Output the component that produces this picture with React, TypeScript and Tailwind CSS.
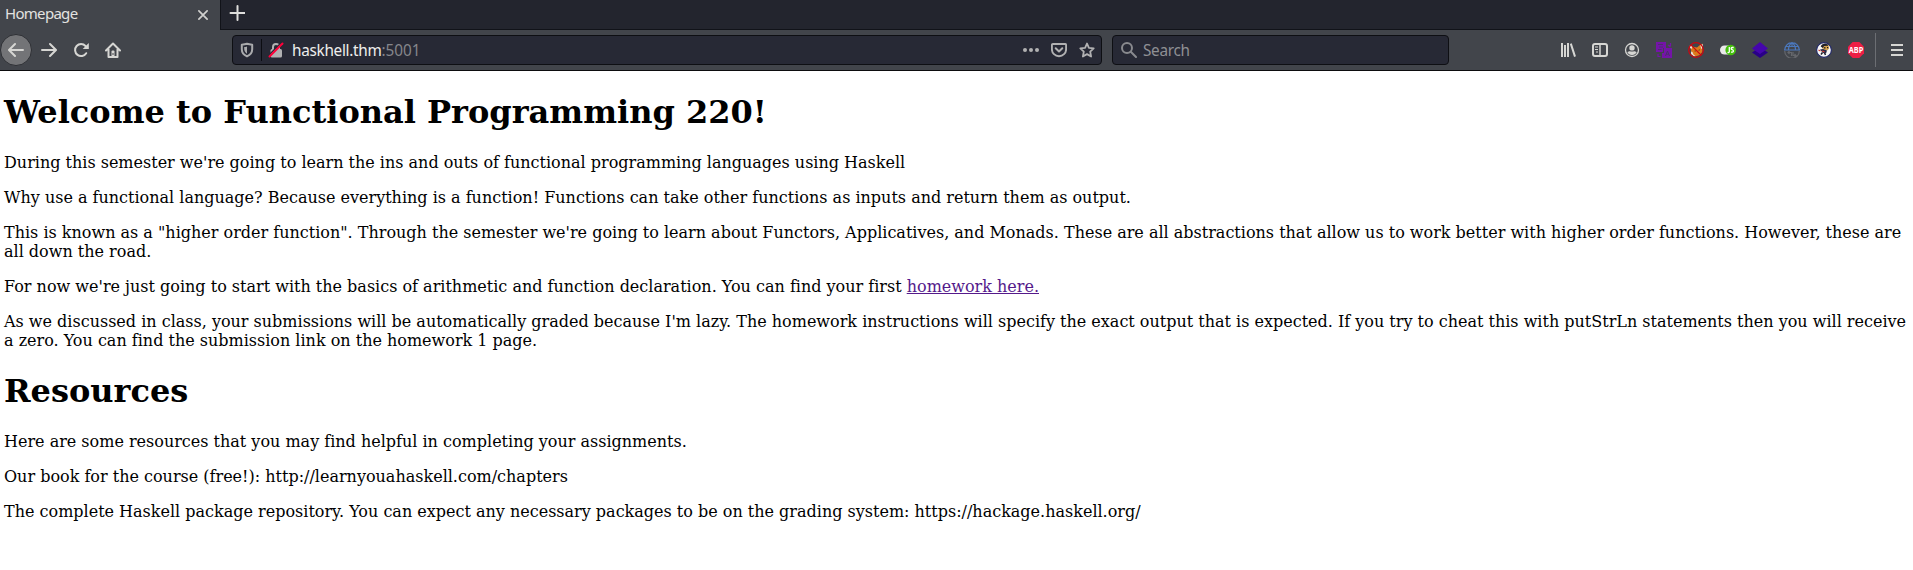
import React from "react";

type IconProps = { children: React.ReactNode; className?: string };

function Icon({ children, className = "h-4 w-4" }: IconProps) {
  return (
    <svg viewBox="0 0 16 16" fill="none" className={`block shrink-0 ${className}`}>
      {children}
    </svg>
  );
}

const line = { stroke: "currentColor", strokeWidth: 2, strokeLinecap: "round", strokeLinejoin: "round" } as const;

function TabStrip() {
  return (
    <div className="flex h-[30px] bg-[#42454b]">
      <div className="flex w-[220px] items-center justify-between pr-[11px] pl-[5px]">
        <span className="-mt-[4px] text-[15px] leading-5 tracking-[-0.7px] text-[#e2e2e0]">Homepage</span>
        <Icon className="-mt-px h-[12px] w-[12px] text-[#d0d0ce]">
          <path d="M2.5 2.5 13.5 13.5M13.5 2.500 2.500 13.500" {...line} strokeWidth={2.3} />
        </Icon>
      </div>
      <div className="flex flex-1 items-start border-b border-l border-[#111319] bg-[#23252e] pt-[5px] pl-2">
        <Icon className="h-4 w-4 text-[#dededc]">
          <path d="M8.5 1v14M1.5 8h14" {...line} />
        </Icon>
      </div>
    </div>
  );
}

function AddressBar() {
  return (
    <div className="flex h-[30px] w-[870px] items-center rounded-[4px] border border-[#0e0f13] bg-[#272935] pr-[6px] pl-[6px]">
      <Icon className="h-4 w-4 text-[#a9aaac]">
        <path d="M8 1.8C6.200 2.400 4.500 2.600 2.800 2.700v4.600c0 3.300 2.100 5.800 5.200 7.100 3.100-1.300 5.200-3.800 5.200-7.100V2.700C11.500 2.600 9.800 2.400 8 1.800Z" {...line} strokeWidth={2} />
        <path d="M8 4.400v7.300C6.200 10.500 5.200 9 5.200 7.100V5.100C6.200 5 7.100 4.800 8 4.400Z" fill="currentColor" />
      </Icon>
      <div className="ml-[6px] h-[22px] w-px bg-[#0c0d12]" />
      <Icon className="ml-[6px] h-4 w-4 text-[#b1b1b2]">
        <path d="M5 8V5a3 3 0 0 1 6 0v3" {...line} strokeLinecap="butt" />
        <rect x="2.500" y="7" width="11.500" height="8.500" rx="1.500" fill="currentColor" />
        <path d="M-.5 14.500 13.500.5" stroke="#272935" strokeWidth="1.500" />
        <path d="M1.500 14.500 14.500 1.500" stroke="#ff0039" strokeWidth="2" strokeLinecap="round" />
      </Icon>
      <span className="ml-[8px] flex-1 text-[15.33px] leading-5 tracking-[-0.3px] text-[#eeeeec]">
        haskhell.thm<span className="tracking-[-0.05px] text-[#85868b]">:5001</span>
      </span>
      <div className="flex gap-3 text-[#b1b1b2]">
        <Icon>
          <g fill="currentColor">
            <circle cx="2" cy="8" r="2" />
            <circle cx="8" cy="8" r="2" />
            <circle cx="14" cy="8" r="2" />
          </g>
        </Icon>
        <Icon>
          <path d="M1.900 2h12.200a1 1 0 0 1 1 1v4.200a7.100 7 0 0 1-14.200 0V3a1 1 0 0 1 1-1Z" {...line} strokeWidth={1.900} />
          <path d="m4.700 6.300 3.300 3.200 3.300-3.200" {...line} />
        </Icon>
        <Icon>
          <path d="m8 1.500 1.900 4.300 4.800.5-3.500 3.300.9 4.900L8 12.100l-4.100 2.400.9-4.900L1.300 6.300l4.800-.5Z" {...line} strokeWidth={1.800} />
        </Icon>
      </div>
    </div>
  );
}

function SearchBar() {
  return (
    <div className="ml-[10px] flex h-[30px] w-[337px] items-center rounded-[4px] border border-[#0e0f13] bg-[#272935] pl-2">
      <Icon className="h-4 w-4 text-[#898a8e]">
        <circle cx="6" cy="6" r="5" {...line} />
        <path d="m9.800 9.800 5.200 5.200" {...line} />
      </Icon>
      <span className="ml-[6px] text-[15.33px] leading-5 tracking-[-0.3px] text-[#8f9094]">Search</span>
    </div>
  );
}

function Extensions() {
  return (
    <div className="ml-[111px] flex gap-4 text-[#d6d6d3]">
      <Icon>
        <path d="M2 1v14M5 3v12M8 1v14M10.800 1.600l4.200 13" {...line} strokeLinecap="butt" />
      </Icon>
      <Icon>
        <rect x="1" y="2" width="14" height="12" rx="2" {...line} />
        <path d="M8 2v12" {...line} strokeWidth={1.500} />
        <path d="M3 5h3M3 7.500h3M4 10h2" stroke="currentColor" strokeWidth="1" />
      </Icon>
      <Icon>
        <circle cx="8" cy="8" r="6.500" stroke="currentColor" strokeWidth="1.300" />
        <circle cx="8" cy="5.900" r="2.700" fill="currentColor" />
        <path d="M3.300 10c1 .1 1.600-.7 2.700-.7.600.4 3.400.4 4 0 1.100 0 1.700.8 2.700.7A5 5 0 0 1 8 13a5 5 0 0 1-4.700-3Z" fill="currentColor" />
      </Icon>
      <Icon>
        <path d="M0 0h10v6H7v4H0Z" fill="#7414a8" />
        <path d="M8 6h8v10H6v-5h2Z" fill="#7414a8" />
        <path d="M2 2.500h5M3 5h4M2 7.500h3.500" stroke="#4a2f6b" strokeWidth=".9" />
        <path d="m9.500 14 2-5 2 5m-3.300-1.800h2.600" stroke="#4a2f6b" />
        <path d="M12 3.500h2.500V1M14.500 5l-2.500-2M2 12v2.500h2.500" stroke="#7414a8" strokeWidth="1.200" />
      </Icon>
      <Icon>
        <path d="m2 3 4 2 3 .5L12 3l2.500-1.500v8L12 13l-5 1.500L3.500 12 3 8Z" fill="#dd7a1c" />
        <path d="m12.300 3.500 2.500-1.500-.2 4-1.300 1Z" fill="#ece3dc" />
        <path d="m2 3 2.500 1.500L3.500 7 1.500 5.500Z" fill="#ece3dc" />
        <path d="m3 9.500 1.500.5 1 2.500 2 1.500-1.500.5-3-2.500Z" fill="#e9ddd1" />
        <path d="M6.500 9H8M10.500 8.300 12 7.800" stroke="#70421b" />
        <circle cx="8" cy="8" r="7.300" stroke="#cc0710" strokeWidth="1.300" />
        <path d="m2.900 2.900 10.200 10.200" stroke="#cc0710" strokeWidth="1.300" />
      </Icon>
      <Icon>
        <rect x="0" y="3.500" width="13" height="9" rx="4.500" fill="#e9e9e9" />
        <circle cx="10.700" cy="8" r="5.300" fill="#43c00b" />
        <path d="M9.300 5v4.700q0 1-1.800.8M13.700 5.500h-1.600q-.9 0-.9 1 0 .9 1 1.200 1.200.3 1.200 1.400 0 1.300-2.400 1" stroke="#fff" strokeWidth="1.300" />
      </Icon>
      <Icon>
        <path d="m8 5 8 5.500L8 16l-8-5.500Z" fill="#290087" />
        <path d="m8 0 8 6.500L8 12 0 6.500Z" fill="#4505ad" />
      </Icon>
      <Icon>
        <g stroke="#4b78bd" strokeWidth="1.200">
          <path d="M.7 8a7.300 7.300 0 0 1 14.600 0M0 8h16M2 4.500h12M8 0v5M4.500 8c0-3.500 1.500-6 3.500-7.500C10 2 11.500 4.500 11.500 8" />
        </g>
        <g stroke="#65676c" strokeWidth="1.200">
          <path d="M.7 9a7.300 7.300 0 0 0 14.600 0M4 10.500h3.500V14M12 13.500H9V10M5.500 9 4 10.500 5.500 12M10.500 12l1.500 1.500-1.500 1.500" />
        </g>
      </Icon>
      <Icon>
        <circle cx="8" cy="8" r="7.400" fill="#f7f7f7" stroke="#202768" strokeWidth="1.100" />
        <path d="M5 3.500 8.500 2l4 1 .7 3.500-2 2L7 7.500Z" fill="#d7a44e" />
        <path d="M4.700 4.500 6 2.500 9 1.600l3.500 1.200-.5 1-4 .2-1 2Z" fill="#20212b" />
        <path d="M8 5.800h1.500M11 5.600h1.200" stroke="#171720" strokeWidth="1.300" />
        <path d="m4 7.500 3-.5 4 1.500-1 3-3-.5Z" fill="#252b48" />
        <path d="m2.500 8 2 1M6 9l2.500.8" stroke="#cc3a32" strokeWidth="1.300" />
        <path d="m6.500 10.500-1.500 2M8.500 11l1 2" stroke="#20212b" strokeWidth="1.500" />
      </Icon>
      <Icon>
        <path d="M4.700 0h6.600L16 4.700v6.600L11.300 16H4.700L0 11.300V4.700Z" fill="#ed1e45" />
        <text x="8" y="11" textAnchor="middle" textLength="14.500" lengthAdjust="spacingAndGlyphs" className="fill-white text-[8px] font-bold">ABP</text>
      </Icon>
    </div>
  );
}

function Toolbar() {
  return (
    <div className="flex h-[41px] items-center border-b border-[#0c0c0e] bg-[#42454b] text-[#d6d6d3]">
      <div className="flex h-8 w-8 items-center justify-center rounded-full border border-[#2e3035] bg-[#737477]">
        <Icon>
          <path d="M15 8H1.500M7 2 1 8l6 6" {...line} />
        </Icon>
      </div>
      <Icon className="ml-[9px] h-4 w-4">
        <path d="M1 8h13.500M9 2l6 6-6 6" {...line} />
      </Icon>
      <Icon className="ml-4 h-4 w-4">
        <path d="M13.200 11.200A6 6 0 1 1 12.500 4" {...line} />
        <path d="M15.800 1v6H9.700Z" fill="currentColor" />
      </Icon>
      <Icon className="ml-4 h-4 w-4">
        <path d="M1 8.500 8 1.500l7 7M3.500 7v8h9V7" {...line} />
        <path d="M6.500 9.500a1 1 0 0 1 1-1h1a1 1 0 0 1 1 1V15h-3Z" fill="currentColor" />
        <path d="M8 11v2" stroke="#42454b" />
      </Icon>
      <div className="ml-[111px] flex">
        <AddressBar />
        <SearchBar />
      </div>
      <Extensions />
      <div className="ml-[11px] h-[34px] w-px bg-[#6c6e73]" />
      <Icon className="ml-[13px] h-4 w-4">
        <path d="M2 3h12M2 8h12M2 13h12" {...line} strokeLinecap="butt" />
      </Icon>
    </div>
  );
}

const heading = "my-[22px] text-[32px] leading-[38px] font-bold";

function Article() {
  return (
    <main className="flow-root pr-1 pl-1 font-['DejaVu_Serif',serif] text-[16px] leading-[19px] text-black [font-variant-ligatures:none]">
      <h1 className={heading}>Welcome to Functional Programming 220!</h1>
      <div className="flex flex-col gap-4">
        <p>During this semester we're going to learn the ins and outs of functional programming languages using Haskell</p>
        <p>Why use a functional language? Because everything is a function! Functions can take other functions as inputs and return them as output.</p>
        <p>This is known as a "higher order function". Through the semester we're going to learn about Functors, Applicatives, and Monads. These are all abstractions that allow us to work better with higher order functions. However, these are all down the road.</p>
        <p>For now we're just going to start with the basics of arithmetic and function declaration. You can find your first <a href="#homework" className="text-[#551a8b] underline">homework here.</a></p>
        <p>As we discussed in class, your submissions will be automatically graded because I'm lazy. The homework instructions will specify the exact output that is expected. If you try to cheat this with putStrLn statements then you will receive a zero. You can find the submission link on the homework 1 page.</p>
      </div>
      <h1 className={heading}>Resources</h1>
      <div className="flex flex-col gap-4">
        <p>Here are some resources that you may find helpful in completing your assignments.</p>
        <p>Our book for the course (free!): http://learnyouahaskell.com/chapters</p>
        <p>The complete Haskell package repository. You can expect any necessary packages to be on the grading system: https://hackage.haskell.org/</p>
      </div>
    </main>
  );
}

export default function App() {
  return (
    <div className="h-[570px] overflow-hidden bg-white font-['Noto_Sans',sans-serif]">
      <TabStrip />
      <Toolbar />
      <Article />
    </div>
  );
}
